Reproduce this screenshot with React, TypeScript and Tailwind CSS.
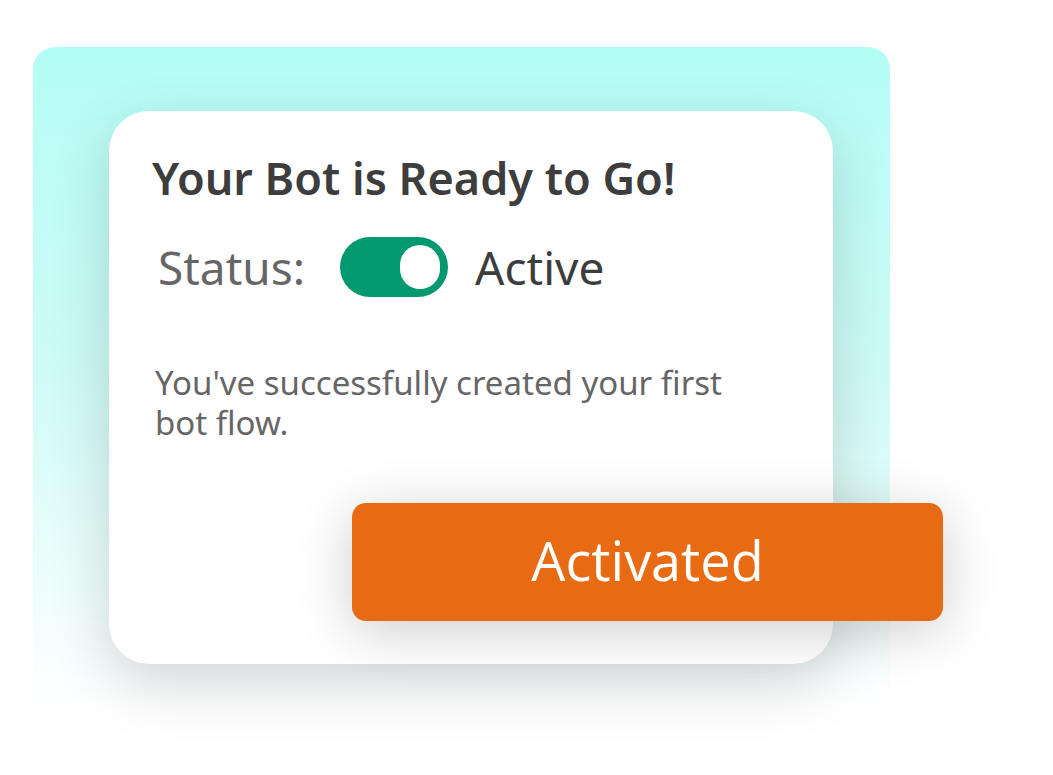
import React from 'react';

const Toggle: React.FC<{ on: boolean }> = ({ on }) => (
  <div
    className={`flex items-center w-[108px] h-[60px] rounded-full px-[8px] ${
      on ? 'bg-[#039970] justify-end' : 'bg-gray-300 justify-start'
    }`}
    role="switch"
    aria-checked={on}
  >
    <div className="w-[40px] h-[44px] rounded-full bg-white" />
  </div>
);

export default function App() {
  return (
    <div
      className="w-[1053px] h-[775px] bg-white overflow-hidden pt-[47px] pl-[33px]"
      style={{ fontFamily: '"Noto Sans", "Open Sans", sans-serif' }}
    >
      <div className="w-[857px] h-[660px] rounded-t-[22px] bg-gradient-to-b from-[#b3fdf5] via-[#cffbf7] to-[#ffffff] pt-[64px] pl-[76px]">
        <div className="w-[724px] h-[553px] rounded-[40px] bg-white shadow-[0_20px_60px_rgba(0,0,0,0.16)] flex flex-col pt-[37px] pl-[43px]">
          <h1 className="text-[45px] leading-[60px] font-semibold text-[#3d3d3d]">
            Your Bot is Ready to Go!
          </h1>

          <div className="flex items-center mt-[29px] ml-[6px]">
            <span className="text-[46px] leading-[60px] text-[#666666]">Status:</span>
            <div className="ml-[35px]">
              <Toggle on />
            </div>
            <span className="ml-[27px] text-[46px] leading-[60px] text-[#3d3d3d]">Active</span>
          </div>

          <p className="mt-[66px] ml-[3px] w-[590px] text-[33px] leading-[40px] text-[#666666]">
            You've successfully created your first bot flow.
          </p>

          <div className="mt-[60px] ml-[200px] w-[591px] h-[118px] pb-[5px] rounded-[14px] bg-[#e86b14] shadow-[0_10px_55px_rgba(0,0,0,0.2)] flex items-center justify-center">
            <span
              className="text-white text-[54px] leading-none"
              style={{ fontFamily: '"Open Sans", "Noto Sans", sans-serif' }}
            >
              Activated
            </span>
          </div>
        </div>
      </div>
    </div>
  );
}
